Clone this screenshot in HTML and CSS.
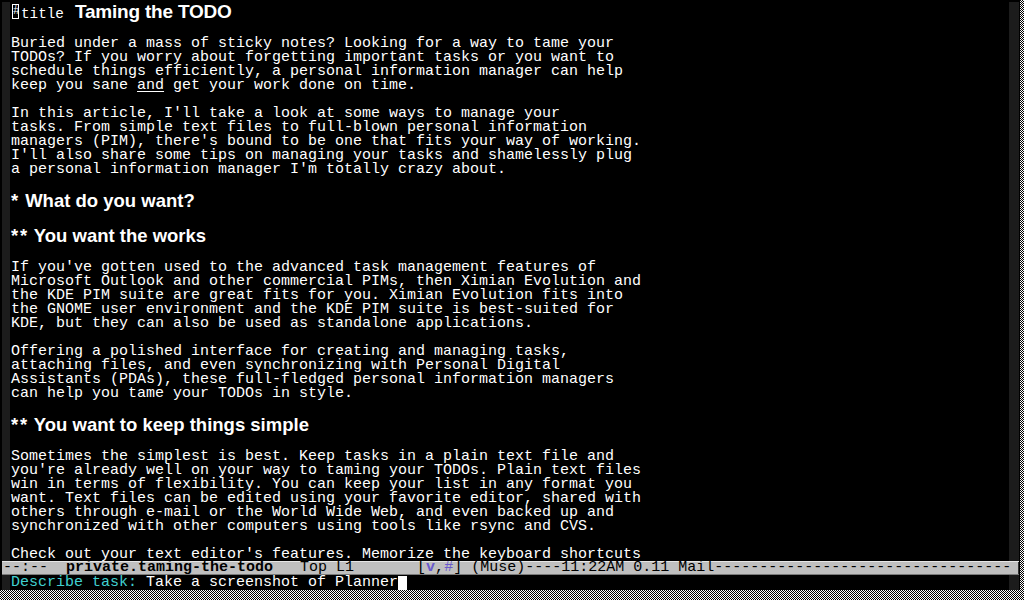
FILE: index.html
```html
<!DOCTYPE html>
<html>
<head>
<meta charset="utf-8">
<title>Taming the TODO</title>
<link rel="stylesheet" href="styles.css">
</head>
<body>
<div class="frame">
  <div class="fringe"></div>
  <div class="scrollbar"></div>
  <div class="textarea">
    <div class="titleline"><span class="hcur">#</span><span class="directive">title</span><span class="title">Taming the TODO</span></div>
    <div class="para">Buried under a mass of sticky notes? Looking for a way to tame your
TODOs? If you worry about forgetting important tasks or you want to
schedule things efficiently, a personal information manager can help
keep you sane <u>and</u> get your work done on time.</div>
    <div class="para">In this article, I'll take a look at some ways to manage your
tasks. From simple text files to full-blown personal information
managers (PIM), there's bound to be one that fits your way of working.
I'll also share some tips on managing your tasks and shamelessly plug
a personal information manager I'm totally crazy about.</div>
    <h1 class="heading"><span class="stars">*</span> What do you want?</h1>
    <h2 class="heading"><span class="stars">**</span> You want the works</h2>
    <div class="para">If you've gotten used to the advanced task management features of
Microsoft Outlook and other commercial PIMs, then Ximian Evolution and
the KDE PIM suite are great fits for you. Ximian Evolution fits into
the GNOME user environment and the KDE PIM suite is best-suited for
KDE, but they can also be used as standalone applications.</div>
    <div class="para">Offering a polished interface for creating and managing tasks,
attaching files, and even synchronizing with Personal Digital
Assistants (PDAs), these full-fledged personal information managers
can help you tame your TODOs in style.</div>
    <h2 class="heading"><span class="stars">**</span> You want to keep things simple</h2>
    <div class="para">Sometimes the simplest is best. Keep tasks in a plain text file and
you're already well on your way to taming your TODOs. Plain text files
win in terms of flexibility. You can keep your list in any format you
want. Text files can be edited using your favorite editor, shared with
others through e-mail or the World Wide Web, and even backed up and
synchronized with other computers using tools like rsync and CVS.</div>
    <div class="para last">Check out your text editor's features. Memorize the keyboard shortcuts</div>
  </div>
  <div class="modeline">--:--  <b>private.taming-the-todo</b>   Top L1       [<b class="flag">v</b>,<span class="flag">#</span>] (Muse)----11:22AM 0.11 Mail---------------------------------</div>
  <div class="minibuffer"><span class="prompt">Describe task:</span> Take a screenshot of Planner<span class="cursor"></span></div>
</div>
</body>
</html>
```
FILE: styles.css
```css
html, body {
  margin: 0;
  padding: 0;
}
body {
  width: 1024px;
  height: 600px;
  overflow: hidden;
  background: repeating-conic-gradient(#ffffff 0 25%, #000000 0 50%) 0 0 / 2px 2px;
}
.frame {
  width: 1020px;
  height: 590px;
  background: #000;
  display: grid;
  grid-template-columns: 2px 8px 999px 10px 1px;
  grid-template-rows: 1px 560px 14px 15px;
  overflow: hidden;
  font-family: "Liberation Mono", "DejaVu Sans Mono", monospace;
  font-size: 15px;
  color: #fff;
}
.fringe {
  grid-column: 2;
  grid-row: 2 / 5;
  background: #1c1c1c;
  margin-top: 1px;
}
.scrollbar {
  grid-column: 4;
  grid-row: 2 / 5;
  background: #1c1c1c;
  margin-top: 1px;
}
.textarea {
  grid-column: 3;
  grid-row: 2;
  padding-left: 1px;
}
.titleline {
  height: 21px;
  line-height: 21px;
  margin-bottom: 14px;
  white-space: nowrap;
}
.hcur {
  display: inline-block;
  box-sizing: border-box;
  width: 7px;
  height: 15px;
  margin-left: 1px;
  border: 1px solid #fff;
  font-size: 12px;
  line-height: 13px;
  text-align: center;
  vertical-align: -1px;
  overflow: hidden;
}
.directive {
  font-size: 14.3px;
  margin-left: 2px;
}
.title {
  font-family: "Liberation Sans", Arial, sans-serif;
  font-weight: bold;
  font-size: 19px;
  margin-left: 11px;
  letter-spacing: -0.2px;
}
.para {
  white-space: pre;
  line-height: 14px;
  margin-bottom: 14px;
  position: relative;
  top: 1px;
}
.para.last {
  margin-bottom: 0;
}
.para u {
  text-underline-offset: 2px;
}
.heading {
  font-family: "Liberation Sans", Arial, sans-serif;
  font-weight: bold;
  font-size: 18.5px;
  line-height: 21px;
  margin: 0 0 14px 0;
  white-space: pre;
  letter-spacing: 0;
}
.stars {
  letter-spacing: 1.8px;
}
.modeline {
  grid-column: 2 / 5;
  grid-row: 3;
  background: #bfbfbf;
  color: #000;
  box-shadow: inset 0 1px 0 #e6e6e6, inset 0 -1px 0 #7a7a7a, inset -1px 0 0 #333;
  line-height: 14px;
  white-space: pre;
  padding-left: 1px;
}
.modeline b {
  font-weight: bold;
}
.flag {
  color: #6a5acd;
}
.minibuffer {
  grid-column: 3;
  grid-row: 4;
  line-height: 14px;
  white-space: pre;
  padding-left: 1px;
  padding-top: 1px;
}
.prompt {
  color: #40d0d0;
}
.cursor {
  display: inline-block;
  width: 9px;
  height: 14px;
  background: #fff;
  vertical-align: top;
}
```
